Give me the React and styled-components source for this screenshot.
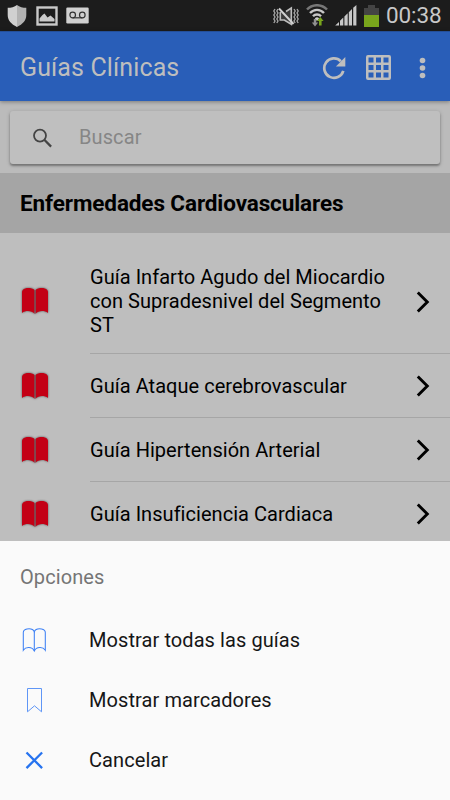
import React from "react";
import styled, { createGlobalStyle } from "styled-components";

const GlobalStyle = createGlobalStyle`
  * { box-sizing: border-box; }
  body { margin: 0; background: #bebebe; font-family: Roboto, "Liberation Sans", sans-serif; }
  svg { display: block; flex: none; }
  h1, h2, h3, p, ul { margin: 0; padding: 0; font-weight: 400; }
`;

const Screen = styled.div`
  width: 450px;
  height: 800px;
  overflow: hidden;
  display: flex;
  flex-direction: column;
  background: #bebebe;
`;

const StatusBar = styled.div`
  height: 31px;
  flex: none;
  display: flex;
  align-items: center;
  justify-content: space-between;
  padding: 0 6px 0 7px;
  background: #1c1c1c;
`;

const StatusGroup = styled.div`
  display: flex;
  align-items: center;
  gap: ${(p) => p.$gap}px;
`;

const Clock = styled.span`
  width: 58px;
  font-size: 22.5px;
  line-height: 29px;
  letter-spacing: -0.1px;
  white-space: nowrap;
  color: #c8c8c8;
`;

const Header = styled.header`
  height: 70px;
  flex: none;
  display: flex;
  align-items: center;
  justify-content: space-between;
  padding: 3px 22px 0 20px;
  border-top: 1px solid #244f99;
  background: #295eb8;
  color: #bebebe;
  box-shadow: 0 1px 4px rgba(0, 0, 0, 0.35);
  z-index: 1;
`;

const Title = styled.h1`
  font-size: 25px;
  line-height: 30px;
  letter-spacing: 0.12px;
`;

const Actions = styled.div`
  display: flex;
  align-items: center;
  padding-bottom: 1px;
`;

const SearchArea = styled.div`
  height: 72px;
  flex: none;
  padding: 10px 10px 9px;
  background: #bbbbbb;
`;

const SearchBox = styled.div`
  height: 53px;
  display: flex;
  align-items: center;
  gap: 25px;
  padding-left: 22px;
  border-radius: 3px;
  background: #bfbfbf;
  box-shadow: 0 2px 2px rgba(0, 0, 0, 0.28), 0 1px 4px rgba(0, 0, 0, 0.2);
`;

const Placeholder = styled.span`
  padding-bottom: 2px;
  font-size: 20px;
  line-height: 24px;
  letter-spacing: 0.1px;
  color: #868686;
`;

const Section = styled.h2`
  height: 60px;
  flex: none;
  padding: 17px 20px 0;
  font-size: 22.5px;
  line-height: 26px;
  letter-spacing: -0.11px;
  font-weight: 700;
  color: #000;
  background: #a5a5a5;
`;

const Guides = styled.ul`
  flex: 1;
  min-height: 0;
  overflow: hidden;
  padding-top: 16px;
  list-style: none;
`;

const GuideRow = styled.li`
  height: ${(p) => (p.$tall ? 105 : 64)}px;
  display: flex;
  align-items: center;
  padding-left: 20px;
`;

const GuideIcon = styled.div`
  padding-bottom: 1px;
`;

const GuideBody = styled.div`
  flex: 1;
  align-self: stretch;
  margin-left: 40px;
  display: flex;
  align-items: center;
  justify-content: space-between;
  padding: ${(p) => (p.$tall ? "0 20px 1px 0" : "1px 20px 0 0")};
  border-bottom: 1.5px solid #a6a6a6;
`;

const GuideText = styled.p`
  width: 305px;
  font-size: 20px;
  line-height: 24px;
  letter-spacing: 0.04px;
  color: #000;
`;

const Disclosure = styled.div`
  padding: ${(p) => (p.$tall ? "2px 0 0" : "0 0 1px")};
`;

const Sheet = styled.section`
  height: 259px;
  flex: none;
  background: #fafafa;
`;

const SheetTitle = styled.h3`
  height: 69px;
  padding: 24px 20px 0;
  font-size: 20px;
  line-height: 24px;
  letter-spacing: 0.1px;
  color: #757575;
`;

const SheetOption = styled.div`
  height: 60px;
  display: flex;
  align-items: center;
  gap: 40px;
  padding-left: 20px;
  font-size: 20px;
  line-height: 24px;
  letter-spacing: 0.08px;
  color: #161616;
`;

const ShieldIcon = () => (
  <svg width="20" height="24" viewBox="0 0 20 24">
    <path d="M10 1C7.500 3 4 3.800 .7 3.800V11c0 5.500 3.500 9 9.300 12z" fill="#d0d0d0" />
    <path d="M10 1c2.500 2 6 2.800 9.300 2.800V11c0 5.500-3.500 9-9.300 12z" fill="#b2b2b2" />
  </svg>
);

const PictureIcon = () => (
  <svg width="22" height="20" viewBox="0 0 22 20">
    <rect x="1.500" y="1.500" width="19" height="17" fill="#1c1c1c" stroke="#c9c9c9" strokeWidth="2.400" />
    <path d="M3.500 15.500v-3l3-3.500 2-1.500 3 4 3-2 4 3.500v2.500z" fill="#c9c9c9" />
  </svg>
);

const VoicemailIcon = () => (
  <svg width="23" height="17" viewBox="0 0 23 17">
    <rect x=".3" y=".5" width="22.400" height="16" rx="1.200" fill="#d0d0d0" />
    <g fill="none" stroke="#333" strokeWidth="1.200">
      <circle cx="6.700" cy="8" r="2.800" />
      <circle cx="16.300" cy="8" r="2.800" />
      <path d="M6.700 10.800h9.600" />
    </g>
  </svg>
);

const VibrateMuteIcon = () => (
  <svg width="26" height="20" viewBox="0 0 26 20">
    <g fill="none" stroke="#a9a9a9" strokeWidth="1.300">
      <path d="M2 3L.8 5 2 7 .8 9 2 11 .8 13 2 15 .8 17" />
      <path d="M5 3L3.800 5 5 7 3.800 9 5 11 3.800 13 5 15 3.800 17" />
      <path d="M21 3l1.200 2L21 7l1.200 2-1.200 2 1.200 2-1.200 2 1.200 2" />
      <path d="M24 3l1.200 2L24 7l1.200 2-1.200 2 1.200 2-1.200 2 1.200 2" />
    </g>
    <path d="M7 6.500h4L18.500 2v16.500l-7-4.500H7z" fill="#3a3a3a" />
    <path d="M7.300 6v8h4l7 4.300V2L13 5.500" fill="none" stroke="#bcbcbc" strokeWidth="1.600" />
    <path d="M6 2.500L20.500 18" stroke="#d0d0d0" strokeWidth="2" />
  </svg>
);

const WifiIcon = () => (
  <svg width="22" height="23" viewBox="0 0 22 23">
    <path d="M1 5.500C6.500-.2 15.500-.2 21 5.500" fill="none" stroke="#777" strokeWidth="2.500" />
    <g fill="none" stroke="#c8c8c8" strokeWidth="2.400">
      <path d="M4 9C8 4.800 14 4.800 18 9" />
      <path d="M7 12.300c2.200-2.400 5.800-2.400 8 0" />
    </g>
    <path d="M8.800 14.500l2.200 2.500 2.200-2.500a3 3 0 0 0-4.400 0z" fill="#c8c8c8" />
    <path d="M7.800 15v3.500H5.800L9 22.500l3.200-4h-2V15z" fill="#909090" />
    <path d="M13 21.500v-4.500h-2L14.300 13l3.300 4h-2v4.500z" fill="#79a51c" />
  </svg>
);

const SignalIcon = () => (
  <svg width="22" height="21" viewBox="0 0 22 21" fill="#c8c8c8">
    <path d="M.2 20.500L4 17v3.500zM5 20.500v-4.700l3.300-3.200v7.900zM9.400 20.500v-9l3.300-3.200v12.200zM13.800 20.500V7.200L17 4v16.500zM18.200 20.500V2.800L21.400 0v20.500z" />
  </svg>
);

const BatteryIcon = () => (
  <svg width="15" height="22" viewBox="0 0 15 22">
    <path d="M0 22V3h4V0h7v3h4v19z" fill="#444" />
    <path d="M0 10h15v12H0z" fill="#79a51c" />
  </svg>
);

const ReloadIcon = () => (
  <svg width="24" height="24" viewBox="0 0 24 24">
    <path d="M21.300 14.800A9.700 9.700 0 1 1 18.800 5.200" fill="none" stroke="#bebebe" strokeWidth="2.700" />
    <path d="M23.300 1v9.400h-9.400z" fill="#bebebe" />
  </svg>
);

const GridIcon = () => (
  <svg width="25" height="25" viewBox="0 0 25 25">
    <path
      fill="#bebebe"
      fillRule="evenodd"
      d="M2 0h21a2 2 0 0 1 2 2v21a2 2 0 0 1-2 2H2a2 2 0 0 1-2-2V2a2 2 0 0 1 2-2zM2.500 2.500v5h5v-5zM10 2.500v5h5v-5zM17.500 2.500v5h5v-5zM2.500 10v5h5v-5zM10 10v5h5v-5zM17.500 10v5h5v-5zM2.500 17.500v5h5v-5zM10 17.500v5h5v-5zM17.500 17.500v5h5v-5z"
    />
  </svg>
);

const MoreIcon = () => (
  <svg width="10" height="22" viewBox="0 0 10 22" fill="#bebebe">
    <circle cx="4.500" cy="3.500" r="2.800" />
    <circle cx="4.500" cy="11" r="2.800" />
    <circle cx="4.500" cy="18.500" r="2.800" />
  </svg>
);

const IconSpacer = styled.div`
  margin-left: ${(p) => p.$left || 0}px;
`;

const SearchIcon = () => (
  <svg width="22" height="20" viewBox="0 0 22 20">
    <circle cx="8" cy="7.600" r="6" fill="none" stroke="#444" strokeWidth="1.800" />
    <path d="M12.300 11.800l6.800 6.800" stroke="#444" strokeWidth="2.300" />
  </svg>
);

const RedBook = styled.svg`
  filter: drop-shadow(0 0 1px rgba(0, 0, 0, 0.55));
  overflow: visible;
`;

const BookIcon = () => (
  <RedBook width="30" height="30" viewBox="0 0 30 30">
    <path
      fill="#c30015"
      d="M14.500 4C12.500 2 8 1.700 5.300 2.400 3 3 2 4.500 2 6v21c3.500-2.700 9.500-2.700 12.500.8zM15.600 4C17.500 2 22 1.700 24.700 2.400 27 3 28 4.500 28 6v21c-3.500-2.700-9.500-2.700-12.400.8z"
    />
    <path d="M15.050 4v23.500" stroke="#75515a" strokeWidth=".9" />
  </RedBook>
);

const Chevron = () => (
  <svg width="14" height="22" viewBox="0 0 14 22">
    <path d="M1.800 1.500L11.300 11l-9.500 9.500" fill="none" stroke="#000" strokeWidth="2.900" />
  </svg>
);

const OutlineBook = () => (
  <svg width="29" height="26" viewBox="0 0 29 26" fill="none" stroke="#3d80f5" strokeWidth="1.050">
    <path d="M14.300 4.800C13 1.600 9 1.700 7 2 4.800 2.400 3.300 3.500 3.300 5.500v17.700c2.500-3.600 8.800-3.600 11 .8 2.200-4.400 8.500-4.400 11-.8V5.500c0-2-1.500-3.100-3.700-3.500-2-.3-6-.4-7.300 2.800z" />
    <path d="M14.300 4.800V24" />
  </svg>
);

const OutlineBookmark = () => (
  <svg width="29" height="26" viewBox="0 0 29 26" fill="none" stroke="#5f96f6" strokeWidth="1">
    <path d="M7.500 1.500h14v23.300l-7-6-7 6z" />
  </svg>
);

const CloseIcon = () => (
  <svg width="29" height="26" viewBox="0 0 29 26" stroke="#2673ef" strokeWidth="2.300">
    <path d="M6.500 5.500l15.600 15.600M22.100 5.500L6.500 21.100" />
  </svg>
);

const guides = [
  { text: "Guía Infarto Agudo del Miocardio con Supradesnivel del Segmento ST", tall: true },
  { text: "Guía Ataque cerebrovascular" },
  { text: "Guía Hipertensión Arterial" },
  { text: "Guía Insuficiencia Cardiaca" },
];

const options = [
  { text: "Mostrar todas las guías", Icon: OutlineBook },
  { text: "Mostrar marcadores", Icon: OutlineBookmark },
  { text: "Cancelar", Icon: CloseIcon },
];

export default function App() {
  return (
    <Screen>
      <GlobalStyle />
      <StatusBar>
        <StatusGroup $gap={8.5}>
          <ShieldIcon />
          <PictureIcon />
          <VoicemailIcon />
        </StatusGroup>
        <StatusGroup $gap={7}>
          <VibrateMuteIcon />
          <WifiIcon />
          <SignalIcon />
          <BatteryIcon />
          <Clock>00:38</Clock>
        </StatusGroup>
      </StatusBar>
      <Header>
        <Title>Guías Clínicas</Title>
        <Actions>
          <ReloadIcon />
          <IconSpacer $left={20}><GridIcon /></IconSpacer>
          <IconSpacer $left={27}><MoreIcon /></IconSpacer>
        </Actions>
      </Header>
      <SearchArea>
        <SearchBox>
          <SearchIcon />
          <Placeholder>Buscar</Placeholder>
        </SearchBox>
      </SearchArea>
      <Section>Enfermedades Cardiovasculares</Section>
      <Guides>
        {guides.map((g) => (
          <GuideRow key={g.text} $tall={g.tall}>
            <GuideIcon>
              <BookIcon />
            </GuideIcon>
            <GuideBody $tall={g.tall}>
              <GuideText>{g.text}</GuideText>
              <Disclosure $tall={g.tall}>
                <Chevron />
              </Disclosure>
            </GuideBody>
          </GuideRow>
        ))}
      </Guides>
      <Sheet>
        <SheetTitle>Opciones</SheetTitle>
        {options.map(({ text, Icon }) => (
          <SheetOption key={text}>
            <Icon />
            {text}
          </SheetOption>
        ))}
      </Sheet>
    </Screen>
  );
}
